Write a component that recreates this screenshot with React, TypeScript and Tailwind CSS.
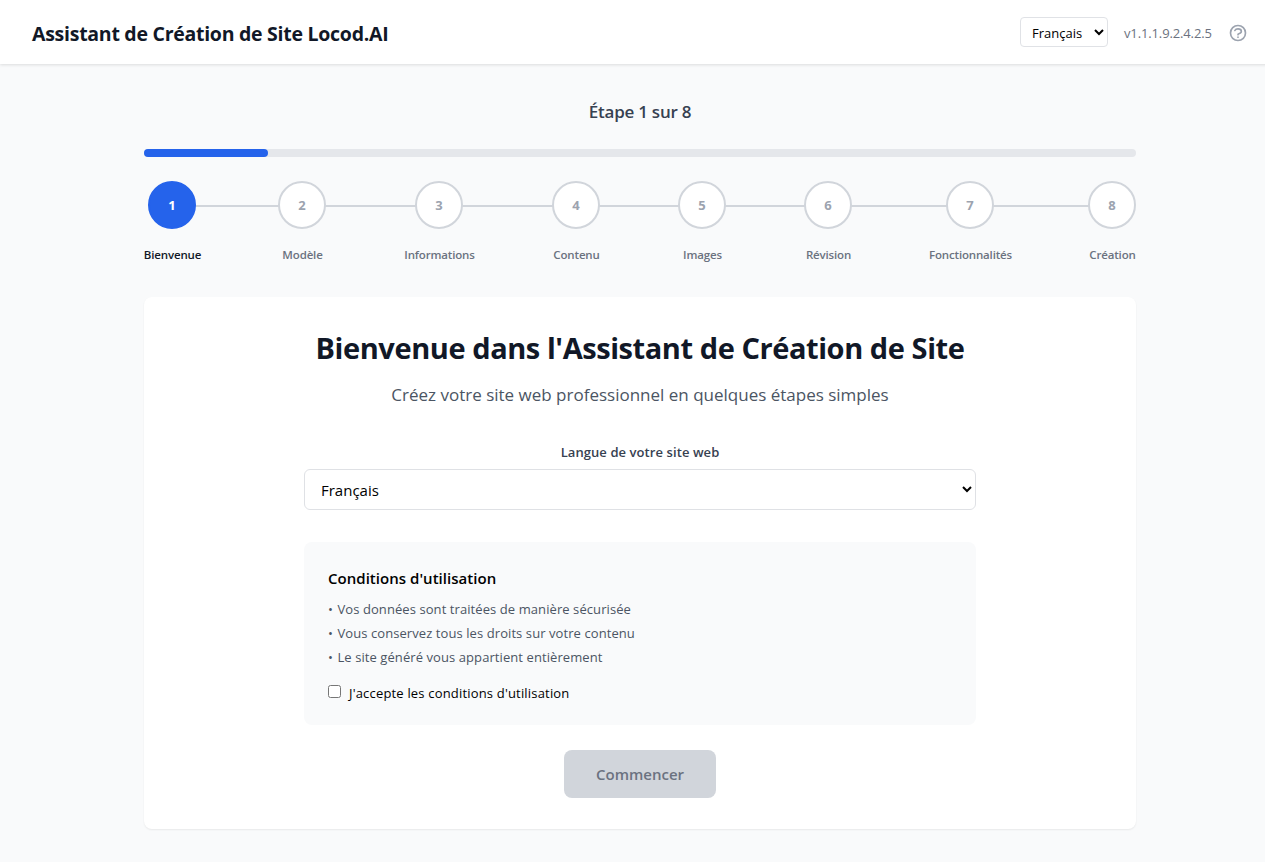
import { useState } from "react";
import { clsx } from "clsx";

const steps = [
  { label: "Bienvenue", column: "w-14" },
  { label: "Modèle", column: "w-12" },
  { label: "Informations", column: "w-[70px]" },
  { label: "Contenu", column: "w-12" },
  { label: "Images", column: "w-12" },
  { label: "Révision", column: "w-12" },
  { label: "Fonctionnalités", column: "w-[80px]" },
  { label: "Création", column: "w-12" },
];

const terms = [
  "Vos données sont traitées de manière sécurisée",
  "Vous conservez tous les droits sur votre contenu",
  "Le site généré vous appartient entièrement",
];

function Header() {
  return (
    <header className="flex h-16 items-center justify-between bg-white px-8 pt-px shadow-[0_1px_3px_0_rgb(0_0_0/0.12)]">
      <h1 className="mt-[3px] text-[19.5px] leading-7 font-bold tracking-[-0.27px] whitespace-nowrap text-[#111827]">
        Assistant de Création de Site Locod.AI
      </h1>
      <div className="flex items-center">
        <select className="mb-px h-[30px] w-[88px] rounded border border-[#e0e2e6] bg-white px-[7px] pt-px text-[13px] text-black">
          <option>Français</option>
          <option>English</option>
        </select>
        <span className="mt-px ml-4 w-[88px] text-[13px] leading-5 tracking-[-0.13px] whitespace-nowrap text-[#6b7280]">
          v1.1.1.9.2.4.2.5
        </span>
        <button className="ml-4 text-[#9ca3af]" aria-label="Aide">
          <svg className="size-5" viewBox="0 0 24 24" fill="none" stroke="currentColor" strokeWidth="2" strokeLinecap="round" strokeLinejoin="round">
            <path d="M8.228 9c.549-1.165 2.03-2 3.772-2 2.21 0 4 1.343 4 3 0 1.4-1.278 2.575-3.006 2.907-.542.104-.994.54-.994 1.093m0 3h.01M21 12a9 9 0 11-18 0 9 9 0 0118 0z" />
          </svg>
        </button>
      </div>
    </header>
  );
}

function Progress() {
  return (
    <section>
      <p className="text-center text-[17px] leading-7 font-semibold tracking-[-0.24px] text-[#374151]">Étape 1 sur 8</p>
      <div className="mt-[23px] h-2 rounded-full bg-[#e5e7eb]">
        <div className="h-2 w-1/8 rounded-full bg-[#2563eb]" />
      </div>
      <div className="relative mt-6">
        <div className="absolute top-6 right-6 left-7 h-0.5 bg-[#d1d5db]" />
        <ol className="relative flex justify-between">
          {steps.map((step, i) => (
            <li key={step.label} className={clsx("flex flex-col items-center", step.column)}>
              <span
                className={clsx(
                  "flex size-12 shrink-0 items-center justify-center rounded-full border-2 pt-0.5 text-[13px] font-bold",
                  i === 0 ? "border-[#2563eb] bg-[#2563eb] text-white" : "border-[#d1d5db] bg-white text-[#9ca3af]",
                )}
              >
                {i + 1}
              </span>
              <span
                className={clsx(
                  "mt-[18px] pl-px text-[11.5px] leading-4 font-semibold tracking-[-0.16px] whitespace-nowrap",
                  i === 0 ? "text-[#111827]" : "text-[#6b7280]",
                )}
              >
                {step.label}
              </span>
            </li>
          ))}
        </ol>
      </div>
    </section>
  );
}

function Welcome() {
  const [accepted, setAccepted] = useState(false);
  return (
    <section className="mt-[34px] flex h-[532px] flex-col items-center rounded-lg bg-white pt-[31px] shadow-[0_1px_2px_0_rgb(0_0_0/0.07)]">
      <h2 className="text-[29px] leading-10 font-bold tracking-[-0.43px] whitespace-nowrap text-[#111827]">
        Bienvenue dans l'Assistant de Création de Site
      </h2>
      <p className="mt-[13px] text-[17px] leading-7 whitespace-nowrap text-[#4b5563]">
        Créez votre site web professionnel en quelques étapes simples
      </p>
      <label className="mt-[33px] text-[13px] leading-5 font-semibold tracking-[0.08px] text-[#374151]" htmlFor="lang">
        Langue de votre site web
      </label>
      <select id="lang" className="mt-[7px] h-[41px] w-[672px] rounded-md border border-[#dfe1e5] bg-white px-3 text-[15px] text-black">
        <option>Français</option>
        <option>English</option>
      </select>
      <div className="mt-8 h-[183px] w-[672px] rounded-lg bg-[#f9fafb] px-6 pt-6">
        <h3 className="text-[15px] leading-6 font-semibold tracking-[0.03px] text-black">Conditions d'utilisation</h3>
        <ul className="mt-[7px] text-[13px] leading-6 tracking-[0.08px] text-[#4b5563]">
          {terms.map((term) => (
            <li key={term}>
              <span className="mr-px">•</span> {term}
            </li>
          ))}
        </ul>
        <label className="mt-3 flex items-center text-[13px] leading-6 tracking-[0.18px] text-black">
          <input type="checkbox" className="mr-2 mb-[3px] size-[13px]" checked={accepted} onChange={(e) => setAccepted(e.target.checked)} />
          J'accepte les conditions d'utilisation
        </label>
      </div>
      <button
        disabled={!accepted}
        className="mt-[24.5px] flex h-12 w-[152px] items-center justify-center rounded-lg bg-[#2563eb] pt-px text-[15px] font-semibold text-white disabled:bg-[#d1d5db] disabled:text-[#6b7280]"
      >
        Commencer
      </button>
    </section>
  );
}

export default function App() {
  return (
    <div className="h-[862px] w-full overflow-hidden bg-[#f9fafb] font-['Open_Sans',sans-serif]">
      <div className="w-[1280px]">
        <Header />
        <main className="mx-auto w-[992px] pt-[34px]">
          <Progress />
          <Welcome />
        </main>
      </div>
    </div>
  );
}
